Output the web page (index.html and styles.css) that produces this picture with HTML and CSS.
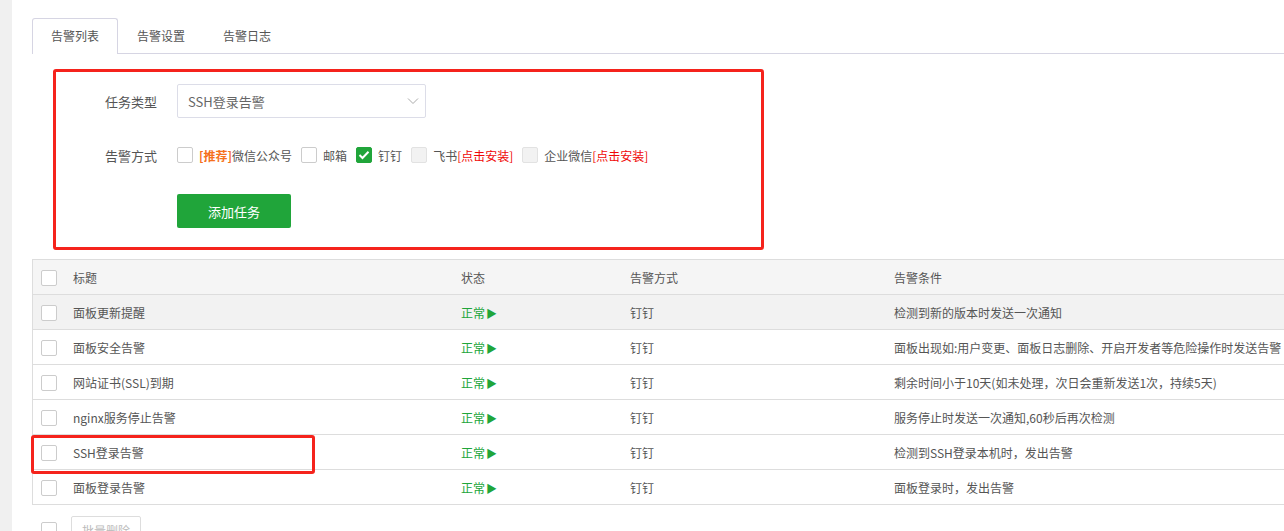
FILE: index.html
```html
<!DOCTYPE html>
<html lang="zh-CN">
<head>
    <meta charset="UTF-8">
    <title>告警列表</title>
    <link rel="stylesheet" href="styles.css">
</head>
<body>
<div class="side"></div>
<div class="main">
    <ul class="tabs">
        <li class="tab active">告警列表</li>
        <li class="tab">告警设置</li>
        <li class="tab">告警日志</li>
    </ul>

    <div class="task-form">
        <div class="form-row">
            <label class="form-label">任务类型</label>
            <div class="select">
                <span>SSH登录告警</span>
                <svg width="12" height="8" viewBox="0 0 12 8"><path d="M1 1.5 L6 6.5 L11 1.5" fill="none" stroke="#aaa" stroke-width="1"/></svg>
            </div>
        </div>
        <div class="form-row">
            <label class="form-label">告警方式</label>
            <div class="methods">
                <span class="method"><i class="cb"></i><b class="tag-orange">[推荐]</b>微信公众号</span>
                <span class="method"><i class="cb"></i>邮箱</span>
                <span class="method"><i class="cb checked"><svg width="12" height="10" viewBox="0 0 12 10"><path d="M1.5 5 L4.5 8 L10.5 1.8" fill="none" stroke="#fff" stroke-width="2"/></svg></i>钉钉</span>
                <span class="method"><i class="cb disabled"></i>飞书<b class="tag-red">[点击安装]</b></span>
                <span class="method"><i class="cb disabled"></i>企业微信<b class="tag-red">[点击安装]</b></span>
            </div>
        </div>
        <div class="form-row">
            <button class="btn-green">添加任务</button>
        </div>
    </div>

    <table class="list">
        <thead>
            <tr>
                <th class="col-cb"><i class="cb"></i></th>
                <th class="col-title">标题</th>
                <th class="col-status">状态</th>
                <th class="col-method">告警方式</th>
                <th>告警条件</th>
            </tr>
        </thead>
        <tbody>
            <tr class="hover">
                <td class="col-cb"><i class="cb"></i></td>
                <td>面板更新提醒</td>
                <td class="status">正常<span class="play">▶</span></td>
                <td>钉钉</td>
                <td>检测到新的版本时发送一次通知</td>
            </tr>
            <tr>
                <td class="col-cb"><i class="cb"></i></td>
                <td>面板安全告警</td>
                <td class="status">正常<span class="play">▶</span></td>
                <td>钉钉</td>
                <td>面板出现如:用户变更、面板日志删除、开启开发者等危险操作时发送告警</td>
            </tr>
            <tr>
                <td class="col-cb"><i class="cb"></i></td>
                <td>网站证书(SSL)到期</td>
                <td class="status">正常<span class="play">▶</span></td>
                <td>钉钉</td>
                <td>剩余时间小于10天(如未处理，次日会重新发送1次，持续5天)</td>
            </tr>
            <tr>
                <td class="col-cb"><i class="cb"></i></td>
                <td>nginx服务停止告警</td>
                <td class="status">正常<span class="play">▶</span></td>
                <td>钉钉</td>
                <td>服务停止时发送一次通知,60秒后再次检测</td>
            </tr>
            <tr>
                <td class="col-cb"><i class="cb"></i></td>
                <td class="ssh-cell">SSH登录告警<span class="row-mark"></span></td>
                <td class="status">正常<span class="play">▶</span></td>
                <td>钉钉</td>
                <td>检测到SSH登录本机时，发出告警</td>
            </tr>
            <tr>
                <td class="col-cb"><i class="cb"></i></td>
                <td>面板登录告警</td>
                <td class="status">正常<span class="play">▶</span></td>
                <td>钉钉</td>
                <td>面板登录时，发出告警</td>
            </tr>
        </tbody>
    </table>

    <div class="batch">
        <i class="cb"></i>
        <button class="btn-plain">批量删除</button>
    </div>
</div>
</body>
</html>
```

FILE: styles.css
```css
body {
    margin: 0;
    font-family: "Noto Sans CJK SC", "Liberation Sans", sans-serif;
    font-size: 12px;
    color: #555;
    background: #fff;
    display: flex;
    height: 531px;
    overflow: hidden;
}
.side {
    width: 12px;
    flex-shrink: 0;
    background: #f0f0f0;
}
.main {
    padding: 18px 0 0 20px;
    width: 1300px;
    flex-shrink: 0;
}
.tabs {
    list-style: none;
    margin: 0;
    padding: 0;
    display: flex;
    border-bottom: 1px solid #d6d5e3;
    height: 35px;
}
.tab {
    width: 86px;
    text-align: center;
    line-height: 35px;
    color: #555;
    box-sizing: border-box;
}
.tab.active {
    border: 1px solid #d6d5e3;
    border-bottom: none;
    border-radius: 3px 3px 0 0;
    background: #fff;
    height: 36px;
    line-height: 34px;
}
.task-form {
    margin: 15px 0 0 21px;
    width: 711px;
    height: 181px;
    box-sizing: border-box;
    border: 3px solid #f5231c;
    border-radius: 3px;
    padding: 12px 0 0 0;
}
.form-row {
    display: flex;
    align-items: center;
    padding-left: 121px;
    margin-bottom: 25px;
    position: relative;
}
.form-row:nth-child(2) {
    margin-bottom: 27px;
}
.form-label {
    position: absolute;
    left: 49px;
    font-size: 13px;
    color: #555;
}
.select {
    width: 249px;
    height: 34px;
    box-sizing: border-box;
    border: 1px solid #dcdde8;
    border-radius: 2px;
    display: flex;
    align-items: center;
    justify-content: space-between;
    padding: 0 6px 0 10px;
    font-size: 13px;
    color: #666;
}
.methods {
    display: flex;
    align-items: center;
    height: 24px;
}
.method {
    display: flex;
    align-items: center;
    margin-right: 9px;
    color: #555;
}
.method b {
    font-weight: normal;
}
.tag-orange {
    color: #f5701c;
    font-weight: bold !important;
}
.tag-red {
    color: #ef0808;
}
.cb {
    display: inline-flex;
    align-items: center;
    justify-content: center;
    width: 16px;
    height: 16px;
    box-sizing: border-box;
    border: 1px solid #ccc;
    border-radius: 2px;
    background: #fff;
    margin-right: 6px;
    vertical-align: middle;
}
.cb.checked {
    background: #20a53a;
    border-color: #20a53a;
}
.cb.disabled {
    background: #f2f2f2;
    border-color: #e2e2e2;
}
.btn-green {
    width: 114px;
    height: 34px;
    border: none;
    border-radius: 2px;
    background: #20a53a;
    color: #fff;
    font-family: inherit;
    font-size: 13px;
}
.list {
    margin-top: 9px;
    width: 1290px;
    border-collapse: collapse;
    border-left: 1px solid #ddd;
}
.list th, .list td {
    height: 34px;
    padding: 0 8px;
    text-align: left;
    font-weight: normal;
    border-top: 1px solid #ddd;
    border-bottom: 1px solid #ddd;
    color: #555;
    white-space: nowrap;
}
.list thead tr {
    background: #f5f5f5;
}
.list tr.hover {
    background: #f2f2f2;
}
.list .col-cb {
    width: 16px;
    padding: 0 8px;
}
.list .col-cb .cb {
    margin: 0;
}
.col-title {
    width: 372px;
}
.col-status {
    width: 153px;
}
.col-method {
    width: 248px;
}
.list td.status {
    color: #20a53a;
}
.play {
    font-size: 11px;
    margin-left: 1px;
}
.ssh-cell {
    position: relative;
}
.row-mark {
    position: absolute;
    left: -34px;
    top: 0;
    width: 284px;
    height: 39px;
    box-sizing: border-box;
    border: 3px solid #f5231c;
    border-radius: 3px;
}
.batch {
    display: flex;
    align-items: center;
    padding: 11px 0 0 9px;
}
.batch .cb {
    margin-right: 14px;
}
.btn-plain {
    width: 70px;
    height: 28px;
    border: 1px solid #ddd;
    border-radius: 2px;
    background: #fff;
    color: #bbb;
    font-family: inherit;
    font-size: 12px;
}
```
